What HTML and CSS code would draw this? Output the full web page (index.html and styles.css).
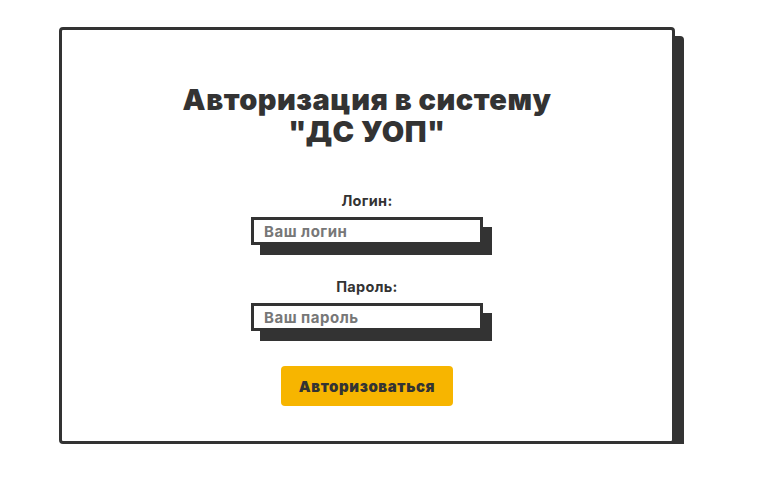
FILE: index.html
```html
<!DOCTYPE html>
<html lang="ru">
<head>
<meta charset="utf-8">
<title>Авторизация</title>
<link rel="stylesheet" href="styles.css">
</head>
<body>
<div class="card">
  <h1 class="title">Авторизация в систему<br>"ДС УОП"</h1>
  <form class="form">
    <label class="label" for="login">Логин:</label>
    <input class="input" id="login" type="text" placeholder="Ваш логин">
    <label class="label label-second" for="pass">Пароль:</label>
    <input class="input" id="pass" type="password" placeholder="Ваш пароль">
    <button class="btn" type="button">Авторизоваться</button>
  </form>
</div>
</body>
</html>
```
FILE: styles.css
```css
html, body {
  margin: 0;
  padding: 0;
  background: #fff;
}
body {
  font-family: Inter, "Noto Sans", sans-serif;
  color: #333;
}
.card {
  box-sizing: border-box;
  width: 616px;
  height: 417px;
  margin: 27px 0 0 59px;
  border: 3px solid #333;
  border-radius: 4px;
  box-shadow: 9px 9px 0 #333;
  background: #fff;
  display: flex;
  flex-direction: column;
  align-items: center;
  padding-top: 54px;
}
.title {
  margin: 0;
  font-size: 29px;
  line-height: 32px;
  font-weight: 900;
  text-align: center;
  letter-spacing: 0.5px;
}
.form {
  display: flex;
  flex-direction: column;
  align-items: center;
  margin-top: 44px;
}
.label {
  font-size: 14.5px;
  font-weight: 700;
  line-height: 17px;
  letter-spacing: 0.3px;
  margin-bottom: 8px;
}
.label-second {
  margin-top: 33px;
}
.input {
  box-sizing: border-box;
  width: 232px;
  height: 28px;
  border: 3px solid #333;
  border-radius: 0;
  box-shadow: 9px 10px 0 #333;
  padding: 0 10px;
  font-family: Inter, "Noto Sans", sans-serif;
  font-size: 15px;
  font-weight: 700;
  letter-spacing: 0.5px;
  color: #333;
  outline: none;
  background: #fff;
}
.input::placeholder {
  color: #777;
}
.btn {
  margin-top: 35px;
  width: 172px;
  height: 40px;
  border: none;
  border-radius: 4px;
  background: #f7b500;
  color: #333;
  font-family: Inter, "Noto Sans", sans-serif;
  font-size: 15px;
  font-weight: 900;
  letter-spacing: 0.6px;
  cursor: pointer;
}
```
